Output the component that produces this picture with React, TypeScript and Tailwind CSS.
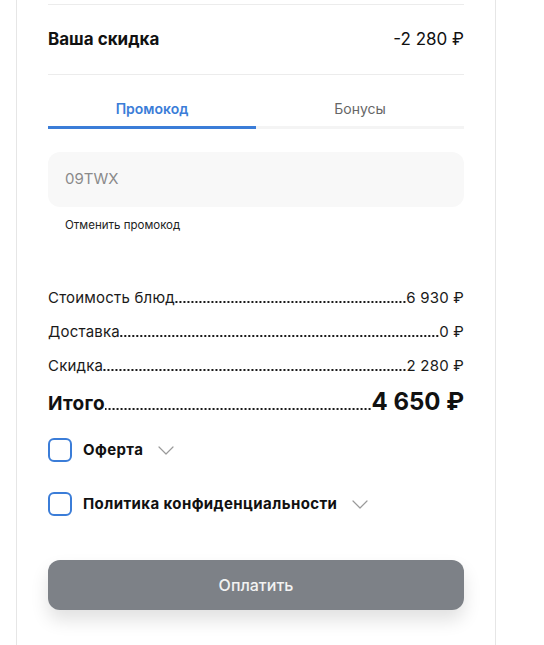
import React from 'react';

interface Line {
  label: string;
  value: string;
}

const LINES: Line[] = [
  { label: 'Стоимость блюд', value: '6 930 ₽' },
  { label: 'Доставка', value: '0 ₽' },
  { label: 'Скидка', value: '2 280 ₽' },
];

// dotted leader sitting on the text baseline
const Leader: React.FC = () => (
  <span className="h-[2px] min-w-0 flex-1 bg-[radial-gradient(circle,#1a1a1a_0.75px,transparent_1.1px)] bg-[length:4px_2px] bg-right bg-repeat-x" />
);

const Chevron: React.FC = () => (
  <svg width="16" height="9" viewBox="0 0 16 9" fill="none" className="shrink-0">
    <path d="M1 1l7 7 7-7" stroke="#9a9a9a" strokeWidth="1.2" strokeLinecap="round" strokeLinejoin="round" />
  </svg>
);

const Check: React.FC<{ label: string }> = ({ label }) => (
  <label className="flex items-center">
    <span className="h-6 w-6 shrink-0 rounded-md border-2 border-[#3b7dd8] bg-white" />
    <span className="ml-[11px] text-[15px] font-bold leading-5 tracking-[0.4px] text-[#111]">{label}</span>
    <span className="ml-[15px] flex items-center">
      <Chevron />
    </span>
  </label>
);

export default function App() {
  return (
    <div className="min-h-screen bg-white font-['Inter',sans-serif]">
      <div className="ml-4 w-[480px] border-x border-[#e6e6e6] px-[31px] pt-1 pb-9">
        <div className="flex h-[71px] items-center justify-between border-y border-[#ececec]">
          <span className="text-[17px] font-bold text-[#111]">Ваша скидка</span>
          <span className="text-[17px] text-[#111]">-2 280 ₽</span>
        </div>

        <div className="flex">
          <button className="flex-1 border-b-[3px] border-[#3b7dd8] pt-[24px] pb-[7px] text-[14px] font-semibold leading-5 text-[#3b7dd8]">
            Промокод
          </button>
          <button className="flex-1 border-b-[3px] border-[#f4f4f4] pt-[24px] pb-[7px] text-[14px] leading-5 text-[#666]">
            Бонусы
          </button>
        </div>

        <div className="mt-[23px] flex h-[55px] items-center rounded-xl bg-[#f8f8f8] px-[17px] text-[15px] text-[#8a8a8a]">
          09TWX
        </div>
        <button className="mt-[10px] pl-[17px] text-[11.5px] leading-4 text-[#222]">Отменить промокод</button>

        <div className="mt-[53px] flex flex-col gap-[14px]">
          {LINES.map((line) => (
            <div key={line.label} className="flex items-baseline text-[15px] leading-5 tracking-[0.2px] text-[#1a1a1a]">
              <span className="shrink-0">{line.label}</span>
              <Leader />
              <span className="shrink-0">{line.value}</span>
            </div>
          ))}
          <div className="-mt-[2px] flex items-baseline text-[#111]">
            <span className="shrink-0 text-[19px] font-bold leading-7 tracking-[0.3px]">Итого</span>
            <Leader />
            <span className="shrink-0 text-[24px] font-bold leading-7">4 650 ₽</span>
          </div>
        </div>

        <div className="mt-[20px] flex flex-col gap-[30px]">
          <Check label="Оферта" />
          <Check label="Политика конфиденциальности" />
        </div>

        <button className="mt-[44px] h-[50px] w-full rounded-xl bg-[#7d8187] text-[16px] font-medium text-[#f2f2f2] shadow-[0_10px_18px_rgba(0,0,0,0.12)]">
          Оплатить
        </button>
      </div>
    </div>
  );
}
